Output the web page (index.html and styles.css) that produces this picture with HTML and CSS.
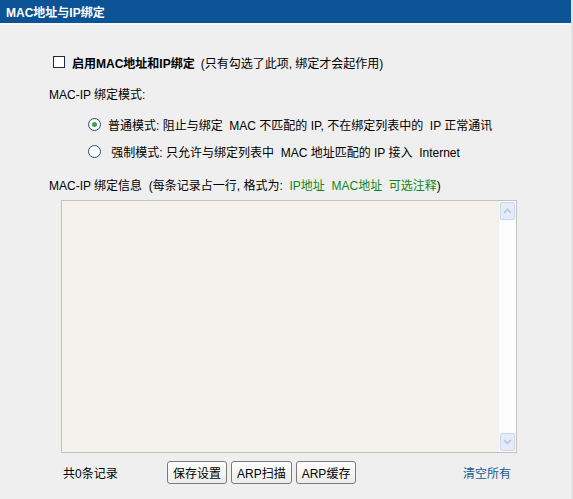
FILE: index.html
```html
<!DOCTYPE html>
<html lang="zh-CN">
<head>
    <meta charset="UTF-8">
    <title>MAC地址与IP绑定</title>
    <link rel="stylesheet" href="styles.css">
</head>
<body>
    <div class="panel">
        <div class="panel-title">MAC地址与IP绑定</div>
        <div class="panel-body">
            <div class="enable-row">
                <span class="check-box"></span>
                <b>启用MAC地址和IP绑定</b>
                <span class="hint">(只有勾选了此项, 绑定才会起作用)</span>
            </div>

            <div class="label-row">MAC-IP 绑定模式:</div>

            <div class="radio-row">
                <span class="radio checked"></span>
                <span>普通模式: 阻止与绑定&nbsp; MAC 不匹配的 IP, 不在绑定列表中的&nbsp; IP 正常通讯</span>
            </div>
            <div class="radio-row">
                <span class="radio"></span>
                <span>&nbsp;强制模式: 只允许与绑定列表中&nbsp; MAC 地址匹配的 IP 接入&nbsp; Internet</span>
            </div>

            <div class="label-row info">MAC-IP 绑定信息&nbsp; (每条记录占一行, 格式为:&nbsp; <span class="green">IP地址&nbsp; MAC地址&nbsp; 可选注释</span>)</div>

            <div class="list-box">
                <div class="list-area"></div>
                <div class="scrollbar">
                    <span class="arrow">
                        <svg width="9" height="6" viewBox="0 0 9 6"><path d="M1 5 L4.5 1.5 L8 5" fill="none" stroke="#b4c6e0" stroke-width="1.6"/></svg>
                    </span>
                    <span class="track"></span>
                    <span class="arrow">
                        <svg width="9" height="6" viewBox="0 0 9 6"><path d="M1 1 L4.5 4.5 L8 1" fill="none" stroke="#b4c6e0" stroke-width="1.6"/></svg>
                    </span>
                </div>
            </div>

            <div class="footer">
                <span class="count">共0条记录</span>
                <div class="buttons">
                    <button>保存设置</button>
                    <button>ARP扫描</button>
                    <button>ARP缓存</button>
                </div>
                <a class="clear-link" href="#">清空所有</a>
            </div>
        </div>
    </div>
</body>
</html>
```
FILE: styles.css
```css
body {
    margin: 0;
    font-family: "Liberation Sans", "Noto Sans CJK SC", sans-serif;
    font-size: 12px;
    color: #000;
    background-color: #efefef;
}
.panel {
    width: 573px;
    height: 499px;
    background-color: #efefef;
    border-right: 2px solid #e2e2e2;
    box-sizing: border-box;
}
.panel-title {
    height: 25px;
    line-height: 26px;
    padding-left: 6px;
    background-color: #0b5394;
    color: #fff;
    font-weight: bold;
    font-size: 12px;
    border-bottom: 2px solid #f6f6f6;
    box-sizing: border-box;
}
.panel-body {
    padding: 25px 0 0 0;
}
.enable-row {
    display: flex;
    align-items: center;
    padding-left: 53px;
    height: 24px;
}
.enable-row b {
    margin-left: 7px;
}
.hint {
    margin-left: 6px;
}
.check-box {
    width: 10px;
    height: 10px;
    border: 1px solid #1c2b49;
    background-color: #fff;
}
.label-row {
    padding-left: 49px;
    margin-top: 11px;
    height: 16px;
}
.radio-row {
    display: flex;
    align-items: center;
    padding-left: 88px;
    height: 20px;
}
.radio-row + .radio-row {
    margin-top: 7px;
}
.label-row + .radio-row {
    margin-top: 13px;
}
.radio {
    width: 11px;
    height: 11px;
    border: 1px solid #1c5180;
    border-radius: 50%;
    background: #fff;
    margin-right: 7px;
    position: relative;
}
.radio.checked::after {
    content: "";
    position: absolute;
    left: 3px;
    top: 3px;
    width: 5px;
    height: 5px;
    border-radius: 50%;
    background-color: #3da24a;
}
.label-row.info {
    margin-top: 15px;
}
.green {
    color: #12861a;
}
.list-box {
    display: flex;
    margin: 8px 0 0 61px;
    width: 456px;
    height: 253px;
    border: 1px solid #c2c2c2;
    box-sizing: border-box;
}
.list-area {
    flex: 1;
    background-color: #f5f2ec;
}
.scrollbar {
    width: 17px;
    display: flex;
    flex-direction: column;
    background-color: #fcfcfe;
    border-left: 1px solid #ededf2;
}
.scrollbar .arrow {
    height: 16px;
    display: flex;
    align-items: center;
    justify-content: center;
    background-color: #e5ecf8;
    border: 1px solid #ccd6e8;
    border-radius: 2px;
    margin: 1px;
}
.scrollbar .track {
    flex: 1;
}
.footer {
    display: flex;
    align-items: center;
    margin-top: 7px;
    height: 24px;
}
.count {
    width: 104px;
    padding-left: 63px;
}
.buttons {
    display: flex;
    gap: 4px;
}
.buttons button {
    height: 23px;
    padding: 0 5px;
    font-family: "Liberation Sans", "Noto Sans CJK SC", sans-serif;
    font-size: 12px;
    background: linear-gradient(#fefefe, #ececea);
    border: 1px solid #7b7b7b;
    border-radius: 3px;
    color: #000;
}
.clear-link {
    margin-left: auto;
    margin-right: 60px;
    color: #1a5b8f;
    text-decoration: none;
}
```
